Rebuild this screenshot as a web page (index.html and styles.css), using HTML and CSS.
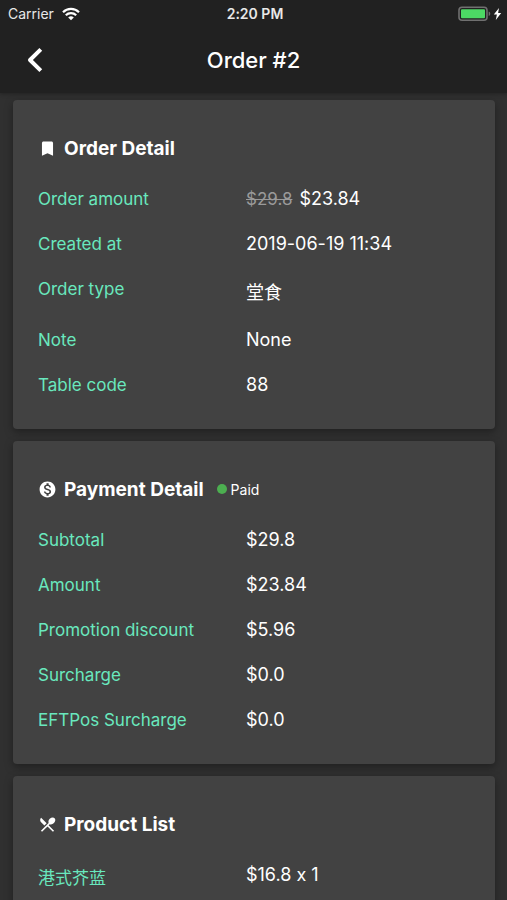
FILE: index.html
```html
<!DOCTYPE html>
<html lang="en">
<head>
<meta charset="utf-8">
<meta name="viewport" content="width=device-width, initial-scale=1">
<title>Order #2</title>
<link rel="stylesheet" href="styles.css">
</head>
<body>
<header class="top">
  <div class="status">
    <div class="carrier">
      <span>Carrier</span>
      <svg width="18" height="14" viewBox="0 0 18 14" fill="none" stroke="#fff" stroke-width="2.2" aria-hidden="true">
        <path d="M1 5.2a11.4 11.4 0 0 1 16 0M3.8 8.3a7.4 7.4 0 0 1 10.4 0"/>
        <path d="M9 13.200 6.200 10.500a4 4 0 0 1 5.600 0z" fill="#fff" stroke="none"/>
      </svg>
    </div>
    <span class="time">2:20 PM</span>
    <div class="battery">
      <svg width="44" height="16" viewBox="0 0 44 16" aria-hidden="true">
        <rect x="1" y="1.2" width="28" height="13" rx="3" fill="none" stroke="#707070" stroke-width="1.6"/>
        <rect x="3" y="3.2" width="24" height="9" rx="1" fill="#4cd964"/>
        <path d="M30.7 5.5q1.6.6 1.6 2.3t-1.6 2.3z" fill="#707070"/>
        <path d="M41 2 35.8 8.6h3.1L37.8 14l5.4-7h-3.1z" fill="#fff"/>
      </svg>
    </div>
  </div>
  <nav class="bar">
    <button class="back" type="button" aria-label="Back">
      <svg width="16" height="26" viewBox="0 0 16 26" fill="none" stroke="#fff" stroke-width="4" stroke-linejoin="round" aria-hidden="true"><path d="M13.800 2.400 3 13l10.800 10.600"/></svg>
    </button>
    <h1>Order #2</h1>
  </nav>
</header>
<main>
  <section class="card">
    <h2>
      <svg class="icon" viewBox="0 0 24 24" fill="#fff" aria-hidden="true"><path d="M17 3H7c-1.1 0-2 .9-2 2v16l7-3 7 3V5c0-1.1-.9-2-2-2z"/></svg>
      Order Detail
    </h2>
    <dl>
      <div><dt>Order amount</dt><dd><s>$29.8</s>$23.84</dd></div>
      <div><dt>Created at</dt><dd>2019-06-19 11:34</dd></div>
      <div><dt>Order type</dt><dd class="cjk" lang="zh">堂食</dd></div>
      <div><dt>Note</dt><dd>None</dd></div>
      <div><dt>Table code</dt><dd>88</dd></div>
    </dl>
  </section>
  <section class="card">
    <h2>
      <svg class="icon" viewBox="0 0 24 24" fill="#fff" aria-hidden="true"><path d="M12 2C6.48 2 2 6.48 2 12s4.480 10 10 10 10-4.480 10-10S17.520 2 12 2zm1.410 16.090V20h-2.670v-1.930c-1.710-.36-3.160-1.460-3.270-3.400h1.960c.1 1.050.82 1.870 2.650 1.870 1.960 0 2.400-.98 2.400-1.590 0-.83-.44-1.610-2.670-2.140-2.480-.6-4.180-1.620-4.180-3.670 0-1.720 1.390-2.840 3.110-3.210V4h2.670v1.950c1.860.45 2.790 1.860 2.850 3.390H14.300c-.05-1.110-.64-1.870-2.220-1.870-1.500 0-2.400.68-2.400 1.640 0 .84.65 1.390 2.670 1.910s4.180 1.390 4.180 3.910c-.01 1.830-1.380 2.830-3.120 3.160z"/></svg>
      Payment Detail
      <span class="paid">Paid</span>
    </h2>
    <dl>
      <div><dt>Subtotal</dt><dd>$29.8</dd></div>
      <div><dt>Amount</dt><dd>$23.84</dd></div>
      <div><dt>Promotion discount</dt><dd>$5.96</dd></div>
      <div><dt>Surcharge</dt><dd>$0.0</dd></div>
      <div><dt>EFTPos Surcharge</dt><dd>$0.0</dd></div>
    </dl>
  </section>
  <section class="card">
    <h2>
      <svg class="icon" viewBox="0 0 24 24" fill="#fff" aria-hidden="true"><path d="M8.100 13.340l2.830-2.830L3.910 3.500c-1.560 1.560-1.560 4.090 0 5.660l4.190 4.180zm6.780-1.810c1.530.71 3.680.21 5.270-1.380 1.910-1.910 2.280-4.650.81-6.120-1.460-1.460-4.200-1.100-6.120.81-1.590 1.590-2.090 3.740-1.380 5.270L3.700 19.870l1.410 1.410L12 14.410l6.880 6.880 1.410-1.410L13.410 13l1.470-1.470z"/></svg>
      Product List
    </h2>
    <dl>
      <div><dt class="cjk" lang="zh">港式芥蓝</dt><dd>$16.8 x 1</dd></div>
    </dl>
  </section>
</main>
</body>
</html>
```
FILE: styles.css
```css
* {
  box-sizing: border-box;
}

body {
  margin: 0;
  background: #303030;
  color: #fff;
  font-family: Inter, "Noto Sans CJK SC", sans-serif;
  font-size: 17px;
  font-variant-ligatures: no-contextual;
  line-height: 21px;
}

.top {
  background: #212121;
  box-shadow: 0 1px 4px rgba(0, 0, 0, 0.3);
}

.status {
  display: grid;
  grid-template-columns: 1fr auto 1fr;
  align-items: center;
  height: 27px;
  padding: 0 5px 0 8px;
  font-size: 14px;
  color: #e8e8e8;
}

.carrier {
  display: flex;
  align-items: center;
  gap: 8px;
}

.time {
  font-weight: 600;
}

.battery {
  display: flex;
  justify-content: flex-end;
}

.bar {
  display: grid;
  grid-template-columns: 72px 1fr 72px;
  align-items: center;
  height: 66px;
}

.back {
  display: flex;
  align-items: center;
  height: 48px;
  padding: 0 0 0 27px;
  border: 0;
  background: none;
}

h1 {
  margin: 0;
  font-size: 22px;
  font-weight: 500;
  line-height: 28px;
  text-align: center;
}

main {
  display: grid;
  gap: 12px;
  padding: 7px 12px 12px 13px;
}

.card {
  padding: 19px 25px 21px;
  border-radius: 4px;
  background: #424242;
  box-shadow: 0 3px 8px rgba(0, 0, 0, 0.35);
}

h2 {
  display: flex;
  align-items: center;
  height: 58px;
  margin: 0;
  font-size: 19px;
  font-weight: 700;
}

.icon {
  width: 19px;
  height: 19px;
  margin-right: 7px;
}

.paid {
  display: flex;
  align-items: center;
  gap: 4px;
  margin-left: 13px;
  font-size: 14px;
  font-weight: 400;
}

.paid::before {
  content: "";
  width: 10px;
  height: 10px;
  border-radius: 50%;
  background: #4caf50;
}

dl {
  margin: 0;
}

dl div {
  display: grid;
  grid-template-columns: 13fr 14fr;
  padding: 12px 0;
}

dt {
  color: #69e8be;
}

dd {
  margin: 0;
  font-size: 18px;
  line-height: 19px;
}

.cjk {
  line-height: 27px;
}

s {
  margin-right: 7px;
  color: #9a9a9a;
  font-size: 17px;
}
```
